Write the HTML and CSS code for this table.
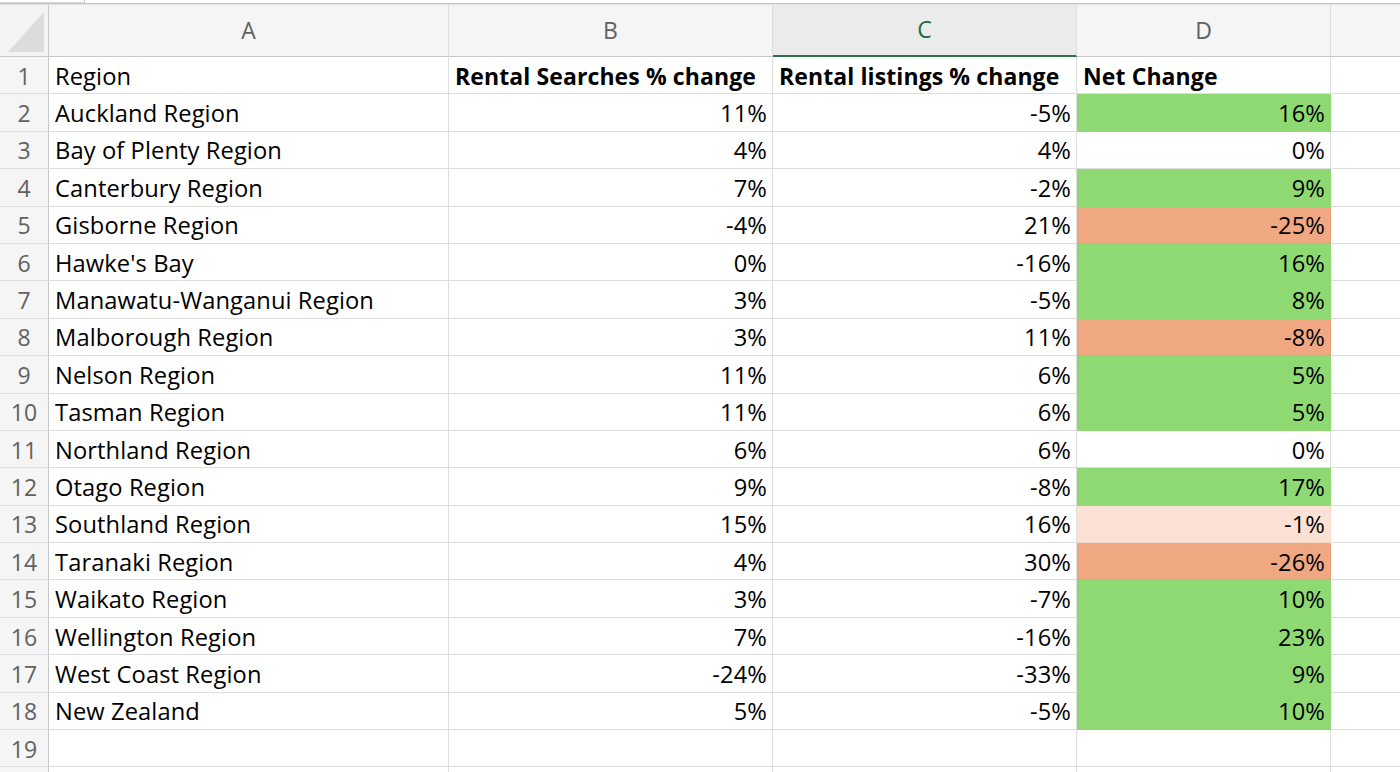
FILE: index.html
```html
<!DOCTYPE html>
<html>
<head>
<meta charset="utf-8">
<link rel="stylesheet" href="styles.css">
</head>
<body>
<div class="topstrip"><div class="tabedge"></div></div>
<div class="sheet">
  <div class="corner"><div class="tri"></div></div>
  <div class="colhead">A</div>
  <div class="colhead">B</div>
  <div class="colhead active">C</div>
  <div class="colhead">D</div>
  <div class="colhead last"></div>

  <div class="rowhead">1</div>
  <div class="cell">Region</div>
  <div class="cell bold">Rental Searches % change</div>
  <div class="cell bold">Rental listings % change</div>
  <div class="cell bold">Net Change</div>
  <div class="cell last"></div>

  <div class="rowhead">2</div><div class="cell">Auckland Region</div><div class="cell num">11%</div><div class="cell num">-5%</div><div class="cell num green">16%</div><div class="cell last"></div>
  <div class="rowhead">3</div><div class="cell">Bay of Plenty Region</div><div class="cell num">4%</div><div class="cell num">4%</div><div class="cell num">0%</div><div class="cell last"></div>
  <div class="rowhead">4</div><div class="cell">Canterbury Region</div><div class="cell num">7%</div><div class="cell num">-2%</div><div class="cell num green">9%</div><div class="cell last"></div>
  <div class="rowhead">5</div><div class="cell">Gisborne Region</div><div class="cell num">-4%</div><div class="cell num">21%</div><div class="cell num orange">-25%</div><div class="cell last"></div>
  <div class="rowhead">6</div><div class="cell">Hawke's Bay</div><div class="cell num">0%</div><div class="cell num">-16%</div><div class="cell num green">16%</div><div class="cell last"></div>
  <div class="rowhead">7</div><div class="cell">Manawatu-Wanganui Region</div><div class="cell num">3%</div><div class="cell num">-5%</div><div class="cell num green">8%</div><div class="cell last"></div>
  <div class="rowhead">8</div><div class="cell">Malborough Region</div><div class="cell num">3%</div><div class="cell num">11%</div><div class="cell num orange">-8%</div><div class="cell last"></div>
  <div class="rowhead">9</div><div class="cell">Nelson Region</div><div class="cell num">11%</div><div class="cell num">6%</div><div class="cell num green">5%</div><div class="cell last"></div>
  <div class="rowhead">10</div><div class="cell">Tasman Region</div><div class="cell num">11%</div><div class="cell num">6%</div><div class="cell num green">5%</div><div class="cell last"></div>
  <div class="rowhead">11</div><div class="cell">Northland Region</div><div class="cell num">6%</div><div class="cell num">6%</div><div class="cell num">0%</div><div class="cell last"></div>
  <div class="rowhead">12</div><div class="cell">Otago Region</div><div class="cell num">9%</div><div class="cell num">-8%</div><div class="cell num green">17%</div><div class="cell last"></div>
  <div class="rowhead">13</div><div class="cell">Southland Region</div><div class="cell num">15%</div><div class="cell num">16%</div><div class="cell num pink">-1%</div><div class="cell last"></div>
  <div class="rowhead">14</div><div class="cell">Taranaki Region</div><div class="cell num">4%</div><div class="cell num">30%</div><div class="cell num orange">-26%</div><div class="cell last"></div>
  <div class="rowhead">15</div><div class="cell">Waikato Region</div><div class="cell num">3%</div><div class="cell num">-7%</div><div class="cell num green">10%</div><div class="cell last"></div>
  <div class="rowhead">16</div><div class="cell">Wellington Region</div><div class="cell num">7%</div><div class="cell num">-16%</div><div class="cell num green">23%</div><div class="cell last"></div>
  <div class="rowhead">17</div><div class="cell">West Coast Region</div><div class="cell num">-24%</div><div class="cell num">-33%</div><div class="cell num green">9%</div><div class="cell last"></div>
  <div class="rowhead">18</div><div class="cell">New Zealand</div><div class="cell num">5%</div><div class="cell num">-5%</div><div class="cell num green">10%</div><div class="cell last"></div>
  <div class="rowhead">19</div><div class="cell"></div><div class="cell"></div><div class="cell"></div><div class="cell"></div><div class="cell last"></div>
  <div class="rowhead"></div><div class="cell"></div><div class="cell"></div><div class="cell"></div><div class="cell"></div><div class="cell last"></div>
</div>
</body>
</html>
```

FILE: styles.css
```css
html, body {
  margin: 0;
  padding: 0;
  background: #ffffff;
  overflow: hidden;
  height: 772px;
}
body {
  font-family: "Open Sans", "Liberation Sans", sans-serif;
  color: #000;
}
.topstrip {
  height: 3px;
  border-bottom: 1px solid #c6c6c6;
  background: #fff;
}
.tabedge {
  width: 84px;
  height: 2px;
  border-right: 1px solid #c6c6c6;
  border-bottom: 1px solid #d6d6d6;
}
.sheet {
  display: grid;
  grid-template-columns: 49px 400px 324px 304px 254px 1fr;
  grid-template-rows: 53px;
  grid-auto-rows: 37.4px;
}
.corner {
  background: #f3f3f3;
  border-right: 1px solid #c8c8c8;
  border-bottom: 1px solid #c8c8c8;
  border-top: 1px solid #e3e3e3;
  box-sizing: border-box;
  position: relative;
}
.tri {
  position: absolute;
  right: 4px;
  bottom: 4px;
  width: 0;
  height: 0;
  border-left: 36px solid transparent;
  border-bottom: 40px solid #dcdcdc;
}
.colhead {
  background: #f5f5f5;
  border-right: 1px solid #dedede;
  border-bottom: 1px solid #c8c8c8;
  border-top: 1px solid #e3e3e3;
  box-sizing: border-box;
  display: flex;
  align-items: center;
  justify-content: center;
  font-size: 23px;
  color: #616161;
  padding-bottom: 2px;
}
.colhead.active {
  background: #ebebeb;
  color: #1f6b35;
  border-bottom: 2px solid #2e7440;
}
.rowhead {
  background: #f5f5f5;
  border-right: 1px solid #c8c8c8;
  border-bottom: 1px solid #dedede;
  box-sizing: border-box;
  display: flex;
  align-items: center;
  justify-content: center;
  font-size: 23px;
  color: #616161;
  padding-top: 1px;
}
.cell {
  border-right: 1px solid #dedede;
  border-bottom: 1px solid #dedede;
  box-sizing: border-box;
  display: flex;
  align-items: center;
  padding: 1px 5px 0 6px;
  font-size: 23.7px;
  letter-spacing: 0.1px;
  white-space: nowrap;
  overflow: hidden;
}
.cell.bold {
  font-weight: 700;
  font-size: 23px;
}
.cell.num {
  justify-content: flex-end;
}
.cell.last,
.colhead.last {
  border-right: none;
}
.cell.green {
  background: #8fd972;
  border-color: #8fd972;
}
.cell.orange {
  background: #f0a882;
  border-color: #e8a07a;
}
.cell.pink {
  background: #fbe2d5;
  border-color: #f6d8c8;
}
```
